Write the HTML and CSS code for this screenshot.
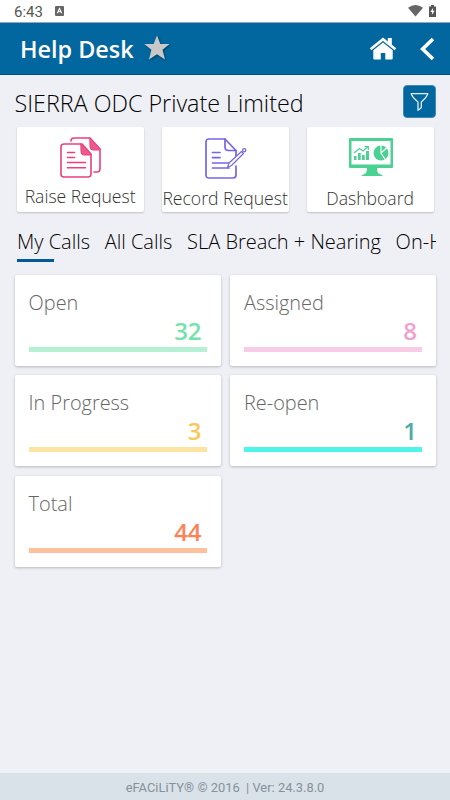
FILE: index.html
```html
<!DOCTYPE html>
<html lang="en">

<head>
    <meta charset="UTF-8">
    <meta name="viewport" content="width=device-width, initial-scale=1.0">
    <title>Help Desk</title>
    <link rel="stylesheet" href="styles.css">
</head>

<body>
    <div class="status-bar">
        <span class="time">6:43</span>
        <svg class="status-app" width="9" height="10" viewBox="0 0 9 10">
            <rect width="9" height="10" rx="1" fill="#666"/>
            <path d="M2.3 7.3L4.5 2.5L6.7 7.3M3.2 5.8H5.8" fill="none" stroke="#fff" stroke-width="1.1"/>
        </svg>
        <svg class="status-wifi" width="15" height="12" viewBox="0 0 15 12">
            <path d="M0 2.8Q7.5 -2.6 15 2.8L7.5 11.6Z" fill="#666"/>
        </svg>
        <svg width="7" height="12" viewBox="0 0 7 12">
            <path d="M0 1.5H2V0H5V1.5H7V12H0Z" fill="#555"/>
            <path d="M4.2 2.8L1.3 7H3.2L2.8 10L5.7 5.8H3.9Z" fill="#fff"/>
        </svg>
    </div>

    <header class="header">
        <h1>Help Desk</h1>
        <svg class="star" width="28" height="28" viewBox="0 0 28 28">
            <path d="M14 1.5L17.4 10H26.6L19.5 15.8L22 25.5L14 20.3L6 25.5L8.4 15.8L1.3 10H10.6Z" fill="#c8c8c8"/>
        </svg>
        <svg class="home" width="28" height="23" viewBox="0 0 28 23">
            <path d="M1.6 12.2L14 2.2L26.4 12.2" fill="none" stroke="#fff" stroke-width="2.7"/>
            <path d="M18.8 1H22.8V8.2L18.8 5Z" fill="#fff"/>
            <path d="M4.3 13.2L14 5.4L23.7 13.2V21.5Q23.7 22.5 22.7 22.5H16.3V16H11.8V22.5H5.3Q4.3 22.5 4.3 21.5Z" fill="#fff"/>
        </svg>
        <svg class="back" width="15" height="24" viewBox="0 0 15 24">
            <path d="M13 2L2.6 12L13 22" fill="none" stroke="#fff" stroke-width="3.6"/>
        </svg>
    </header>

    <main class="content">
        <div class="company">
            <h2>SIERRA ODC Private Limited</h2>
            <button class="filter-btn" aria-label="Filter">
                <svg width="19" height="20" viewBox="0 0 19 20">
                    <path d="M1.2 1.7H17.8Q17.2 4.8 11.3 10V15.8L8 18.3V10Q1.8 4.8 1.2 1.7Z" fill="none" stroke="#e3eef6" stroke-width="1.3" stroke-linejoin="round"/>
                </svg>
            </button>
        </div>

        <div class="actions">
            <div class="action">
                <svg width="42" height="42" viewBox="0 0 42 42" fill="none" stroke="#ec3f7f" stroke-width="1.6" stroke-linecap="round" stroke-linejoin="round">
                    <path d="M11 4Q11 1 14 1H30L40 12V32Q40 35 37 35H34"/>
                    <path d="M30 1L40 12V13H33Q30 13 30 10Z" fill="#ed5b8d" stroke-width="1"/>
                    <path d="M4 7H22L31 17V37Q31 40 28 40H4Q1 40 1 37V10Q1 7 4 7Z" fill="#fff"/>
                    <path d="M21 7L31 17V18H24Q21 18 21 15Z" fill="#ed5b8d" stroke-width="1"/>
                    <path d="M7.5 15.5H14.5M7.5 20.5H14.5M7.5 25.5H25.5M7.5 30.8H25.5"/>
                </svg>
                <span>Raise Request</span>
            </div>
            <div class="action lower">
                <svg width="42" height="42" viewBox="0 0 42 42" fill="none" stroke="#7565e7" stroke-width="1.7" stroke-linecap="round" stroke-linejoin="round">
                    <path d="M31 28V37Q31 40 28 40H4Q1 40 1 37V4Q1 1 4 1H20L31 12.5V18"/>
                    <path d="M20 1V9Q20 12.5 23.5 12.5H31"/>
                    <path d="M7.5 14.5H15M7.5 19.7H15M7.5 25H25M7.5 30H24"/>
                    <path d="M24 25L36.5 13.5L38.5 15.5L26.5 27.5L22.5 29.5Z" fill="#fff" stroke-width="1.2"/>
                    <circle cx="39.2" cy="12.2" r="1.6" stroke-width="1.2"/>
                </svg>
                <span>Record Request</span>
            </div>
            <div class="action lower">
                <svg width="44" height="40" viewBox="0 0 44 40" fill="#4bd292">
                    <path d="M0 1Q0 0 1 0H43Q44 0 44 1V29Q44 30 43 30H28Q28 36.5 32 36.5L34 38H12L14 36.5Q18 36.5 18 30H1Q0 30 0 29ZM2.5 3V26.5H41.5V3Z" fill-rule="evenodd"/>
                    <path d="M5 18H7.5V22H5ZM9 15H11.7V22H9ZM13 17H15.8V22H13ZM17 13H20V22H17Z"/>
                    <path d="M5 15L10.5 10.5L14 13L19 8.5M15.5 8.5H19.3V12" fill="none" stroke="#4bd292" stroke-width="1.2"/>
                    <circle cx="32" cy="15" r="7.5"/>
                    <path d="M32 7V15L38 9.5M32 15L36.5 22" fill="none" stroke="#fff" stroke-width="1.1"/>
                </svg>
                <span>Dashboard</span>
            </div>
        </div>

        <nav class="tabs">
            <a class="active">My Calls</a>
            <a>All Calls</a>
            <a>SLA Breach + Nearing</a>
            <a>On-Hold</a>
        </nav>

        <div class="cards">
            <div class="card open">
                <p class="label">Open</p>
                <p class="count">32</p>
            </div>
            <div class="card assigned">
                <p class="label">Assigned</p>
                <p class="count">8</p>
            </div>
            <div class="card progress">
                <p class="label">In Progress</p>
                <p class="count">3</p>
            </div>
            <div class="card reopen">
                <p class="label">Re-open</p>
                <p class="count">1</p>
            </div>
            <div class="card total">
                <p class="label">Total</p>
                <p class="count">44</p>
            </div>
        </div>
    </main>

    <footer class="footer">eFACiLiTY® © 2016 &nbsp;| Ver: 24.3.8.0</footer>
</body>

</html>
```
FILE: styles.css
```css
* {
    box-sizing: border-box;
}

body {
    margin: 0;
    height: 800px;
    display: flex;
    flex-direction: column;
    overflow: hidden;
    background-color: #eff0f6;
    font-family: "Open Sans", sans-serif;
    font-weight: 300;
}

h1, h2, p {
    margin: 0;
}

svg {
    display: block;
    flex: none;
}

/* phone status bar */
.status-bar {
    height: 22px;
    padding: 0 14px;
    display: flex;
    align-items: center;
    background-color: #fff;
    font-family: Roboto, sans-serif;
    font-weight: 400;
    font-size: 15px;
    color: #555;
}

.time {
    width: 41px;
    padding-top: 2px;
}

.status-wifi {
    margin-left: auto;
    margin-right: 6px;
}

/* header */
.header {
    height: 53px;
    padding: 0 15px 0 20px;
    display: flex;
    align-items: center;
    background-color: #02679f;
    border-top: 1px solid #91a7bd;
    border-bottom: 1px solid #024b8e;
}

.header h1 {
    font-size: 23.4px;
    font-weight: 600;
    line-height: 30px;
    color: #fff;
}

.star {
    margin: -2px 0 0 9px;
    filter: drop-shadow(1px 1px 1px rgba(0, 0, 0, 0.4));
}

.home {
    margin-left: auto;
    margin-right: 23px;
}

/* content */
.content {
    flex: 1;
    padding: 10px 14px 0;
}

.company {
    display: flex;
    justify-content: space-between;
    height: 33px;
}

.company h2 {
    padding-top: 2px;
    padding-left: 0.5px;
    font-size: 23.3px;
    line-height: 32px;
    font-weight: 300;
    color: #000;
    white-space: nowrap;
}

.filter-btn {
    width: 33px;
    height: 33px;
    padding: 0;
    display: flex;
    align-items: center;
    justify-content: center;
    background-color: #02679f;
    border: 1px solid #4388b4;
    border-radius: 4px;
}

.actions {
    display: grid;
    grid-template-columns: repeat(3, 127px);
    gap: 18px;
    margin: 9px 0 0 2.6px;
}

.action {
    height: 85px;
    padding-top: 10px;
    display: flex;
    flex-direction: column;
    align-items: center;
    background-color: #fff;
    border-radius: 2px;
    box-shadow: 0 1px 2px rgba(0, 0, 0, 0.2);
    font-size: 17.6px;
    line-height: 24px;
    color: #333;
    white-space: nowrap;
}

.action svg {
    margin-left: 1px;
}

.action span {
    margin-top: auto;
    margin-bottom: 4px;
}

.action.lower {
    padding-top: 11px;
}

.action.lower span {
    margin-bottom: 2px;
}

.tabs {
    display: flex;
    gap: 14.7px;
    height: 63px;
    margin-left: 3px;
    padding-top: 16px;
    overflow: hidden;
    font-size: 20px;
    line-height: 28px;
    color: #000;
    white-space: nowrap;
}

.tabs .active::after {
    content: "";
    display: block;
    width: 37px;
    height: 2.5px;
    margin-top: 3px;
    background-color: #02599c;
}

.cards {
    display: grid;
    grid-template-columns: 206px 206px;
    gap: 9.4px;
    margin-left: 0.6px;
}

.card {
    height: 91px;
    padding: 14px 14px 12px;
    background-color: #fff;
    border-radius: 2px;
    box-shadow: 0 1px 3px rgba(0, 0, 0, 0.24);
}

.label {
    font-size: 19.9px;
    line-height: 28px;
    color: #666;
}

.count {
    height: 35px;
    padding-right: 5px;
    border-bottom: 5px solid;
    text-align: right;
    font-size: 24px;
    font-weight: 600;
    line-height: 28px;
}

.open .count {
    color: #75e2ac;
    border-color: #b5f0d2;
}

.assigned .count {
    color: #f2a0ce;
    border-color: #f8cce6;
}

.progress .count {
    color: #fac858;
    border-color: #fde3a2;
}

.reopen .count {
    color: #4caca8;
    border-color: #4ff5e8;
}

.total .count {
    color: #ff8257;
    border-color: #ffc09c;
}

.footer {
    height: 27px;
    background-color: #dae2e9;
    font-family: Roboto, sans-serif;
    font-weight: 400;
    font-size: 12.9px;
    line-height: 29px;
    text-align: center;
    color: #849199;
}
```
